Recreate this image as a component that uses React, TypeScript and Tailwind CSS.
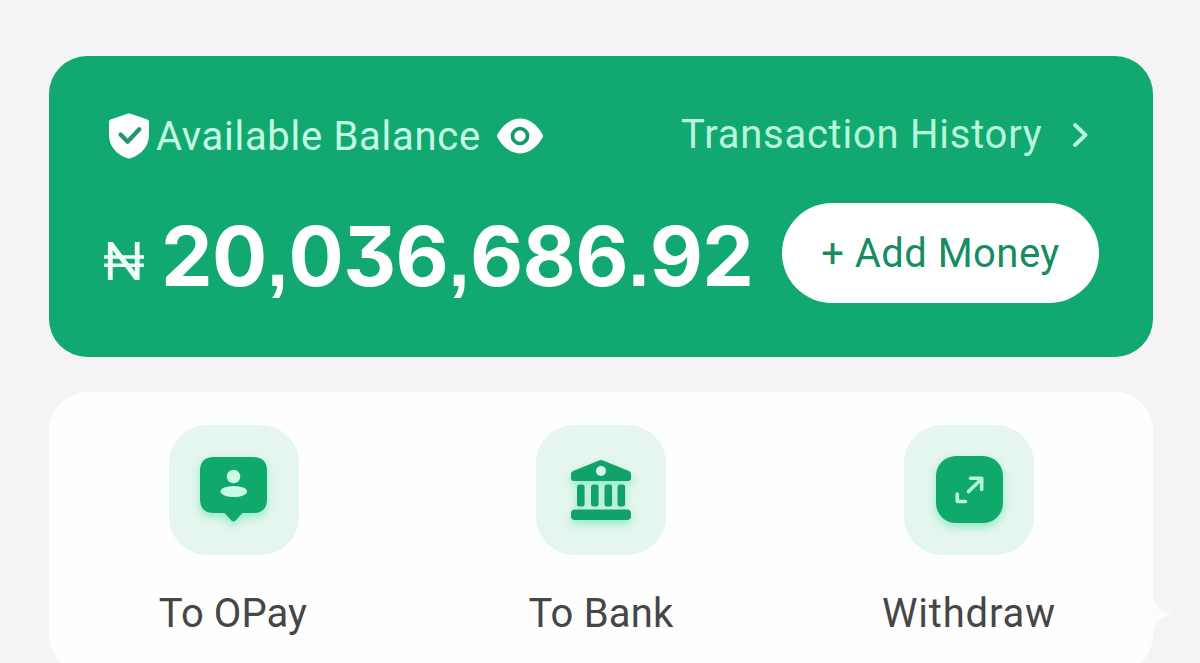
import type { ReactNode } from 'react'

type Action = {
  label: string
  icon: ReactNode
  tileClass?: string
  labelClass: string
}

function ShieldIcon() {
  return (
    <svg viewBox="0 0 42 48" className="h-12 w-[42px] shrink-0">
      <path
        d="M21 1.200 39.400 7.400Q41 8 41 9.800V23C41 34 33.500 42.500 22.600 46.300Q21 46.900 19.400 46.300C8.500 42.500 1 34 1 23V9.800Q1 8 2.600 7.400Z"
        fill="#fff"
      />
      <path d="m12.600 22.500 7 7.200L31.300 17.300" fill="none" stroke="#20986b" strokeWidth="4.300" strokeLinecap="round" strokeLinejoin="round" />
    </svg>
  )
}

function EyeIcon() {
  return (
    <svg viewBox="0 0 48 36" className="h-9 w-12 shrink-0">
      <path
        d="M1.500 19.600Q.5 18 1.500 16.400C7 6.500 15 .6 24 .6S41 6.500 46.500 16.400Q47.500 18 46.500 19.600C41 29.500 33 35.400 24 35.400S7 29.500 1.500 19.600Z"
        fill="#fff"
      />
      <circle cx="24" cy="18" r="7.500" fill="none" stroke="#15996a" strokeWidth="3.700" />
    </svg>
  )
}

function NairaIcon() {
  return (
    <svg viewBox="0 0 42 38" className="h-[38px] w-[42px] shrink-0 translate-y-[8px]" fill="none" stroke="#effff9">
      <path d="M6.300 38V0M33.200 38V0" strokeWidth="4.800" />
      <path d="M6.300 1 33.200 37" strokeWidth="5" />
      <path d="M0 15H40M0 23.200H40" strokeWidth="3.400" />
    </svg>
  )
}

function OPayIcon() {
  return (
    <svg viewBox="0 0 67 66" className="h-[66px] w-[67px] -translate-x-px overflow-visible drop-shadow-[0_4px_4px_#65e6b2aa]">
      <path
        d="M14 0H53Q67 0 67 14V42Q67 56 53 56H42.500L35.600 63.600Q33.500 65.600 31.400 63.600L24.500 56H14Q0 56 0 42V14Q0 0 14 0Z"
        fill="#11a96b"
      />
      <circle cx="33.500" cy="19.500" r="6.800" fill="#c9fbe7" />
      <ellipse cx="33.800" cy="34.500" rx="13.300" ry="5.500" fill="#c9fbe7" />
    </svg>
  )
}

function BankIcon() {
  return (
    <svg viewBox="0 0 60 60" className="h-[60px] w-[60px] overflow-visible drop-shadow-[0_4px_4px_#65e6b2aa]" fill="#11a26a">
      <path d="M28 .6Q30 -.4 32 .6L57.800 11Q60 12 60 14V18Q60 21 57 21H3Q0 21 0 18V14Q0 12 2.200 11Z" />
      <circle cx="30" cy="11" r="5" fill="#d5fbec" />
      <rect x="6" y="24.500" width="7.600" height="22" rx="2.500" />
      <rect x="20" y="24.500" width="7.600" height="22" rx="2.500" />
      <rect x="33.500" y="24.500" width="7.600" height="22" rx="2.500" />
      <rect x="46.500" y="24.500" width="7.600" height="22" rx="2.500" />
      <rect x="0" y="49.500" width="60" height="10.500" rx="4" />
    </svg>
  )
}

function WithdrawIcon() {
  return (
    <svg viewBox="0 0 67 67" className="h-[67px] w-[67px] -translate-y-px overflow-visible drop-shadow-[0_4px_4px_#65e6b2aa]">
      <rect width="67" height="67" rx="20" fill="#11a96b" />
      <g fill="none" stroke="#b6f5dc" strokeWidth="3.600" strokeLinecap="round" strokeLinejoin="round">
        <path d="M21.300 38V45.500H29.500" />
        <path d="M32.500 35.500 45 23.500M34.500 22.300H45.700V33.500" />
      </g>
    </svg>
  )
}

// Square-cut comma and point between the digit groups
function Separator({ children }: { children: string }) {
  return (
    <span className="inline-block w-[22px] text-center font-['Liberation_Sans',sans-serif] text-[76px] leading-none tracking-normal">
      {children}
    </span>
  )
}

const ACTIONS: Action[] = [
  { label: 'To OPay', icon: <OPayIcon />, tileClass: 'translate-x-px', labelClass: 'tracking-[0.1px]' },
  { label: 'To Bank', icon: <BankIcon />, labelClass: 'tracking-[0.2px]' },
  { label: 'Withdraw', icon: <WithdrawIcon />, labelClass: 'tracking-[0.8px]' },
]

export default function App() {
  return (
    <main className="relative h-[663px] w-[1200px] overflow-hidden bg-[#f4f4f7] pt-14 pl-[49px] font-[Roboto,sans-serif]">
      {/* Balance card */}
      <section className="h-[301px] w-[1104px] rounded-[38px] bg-[#12a970] pt-[52px] pr-[54px] pl-[55px]">
        <div className="flex h-14 items-center justify-between">
          <div className="flex items-center pl-[4px]">
            <ShieldIcon />
            <span className="ml-[6px] w-[340px] translate-y-px text-[40px] leading-none tracking-[0.7px] whitespace-nowrap text-[#c3fbe5]">
              Available Balance
            </span>
            <EyeIcon />
          </div>
          <button className="flex items-center pr-[11px] text-[#b7f6dc]">
            <span className="w-[391px] -translate-y-px text-left text-[40px] leading-none tracking-[0.75px] whitespace-nowrap">
              Transaction History
            </span>
            <svg viewBox="0 0 16 24" className="h-6 w-4 -translate-y-px" fill="none" stroke="currentColor" strokeWidth="3.800" strokeLinecap="round" strokeLinejoin="round">
              <path d="m3 2 10.500 10L3 22" />
            </svg>
          </button>
        </div>

        <div className="mt-[39px] flex h-[100px] items-center">
          <NairaIcon />
          <span className="ml-[15px] w-[621px] translate-y-[4px] font-[Inter,sans-serif] text-[82px] leading-none font-bold tracking-[-0.7px] whitespace-nowrap text-white [font-feature-settings:'cv09']">
            20<Separator>,</Separator>036<Separator>,</Separator>686<Separator>.</Separator>92
          </span>
          <button className="h-[100px] w-[317px] shrink-0 rounded-full bg-white pt-0.5 text-[40px] tracking-[0.45px] whitespace-nowrap text-[#168c61]">
            + Add Money
          </button>
        </div>
      </section>

      {/* Quick actions */}
      <section className="mt-[35px] grid h-[281px] w-[1104px] grid-cols-3 rounded-[38px] bg-[#fefefe] pt-[33px]">
        {ACTIONS.map((action) => (
          <button key={action.label} className="flex flex-col items-center">
            <span className={`flex size-[130px] items-center justify-center rounded-[38px] bg-[#e5f6ee] ${action.tileClass ?? ''}`}>
              {action.icon}
            </span>
            <span className={`mt-[39px] text-[40px] leading-none whitespace-nowrap text-[#454647] ${action.labelClass}`}>{action.label}</span>
          </button>
        ))}
      </section>

      {/* Sparkle peeking out past the card edge */}
      <svg viewBox="0 0 19 38" className="absolute top-[595px] left-[1153px] h-[38px] w-[19px]" fill="#fcfcfd">
        <path d="M0 4Q4 15 19 19 4 23 0 34Z" />
      </svg>
    </main>
  )
}
